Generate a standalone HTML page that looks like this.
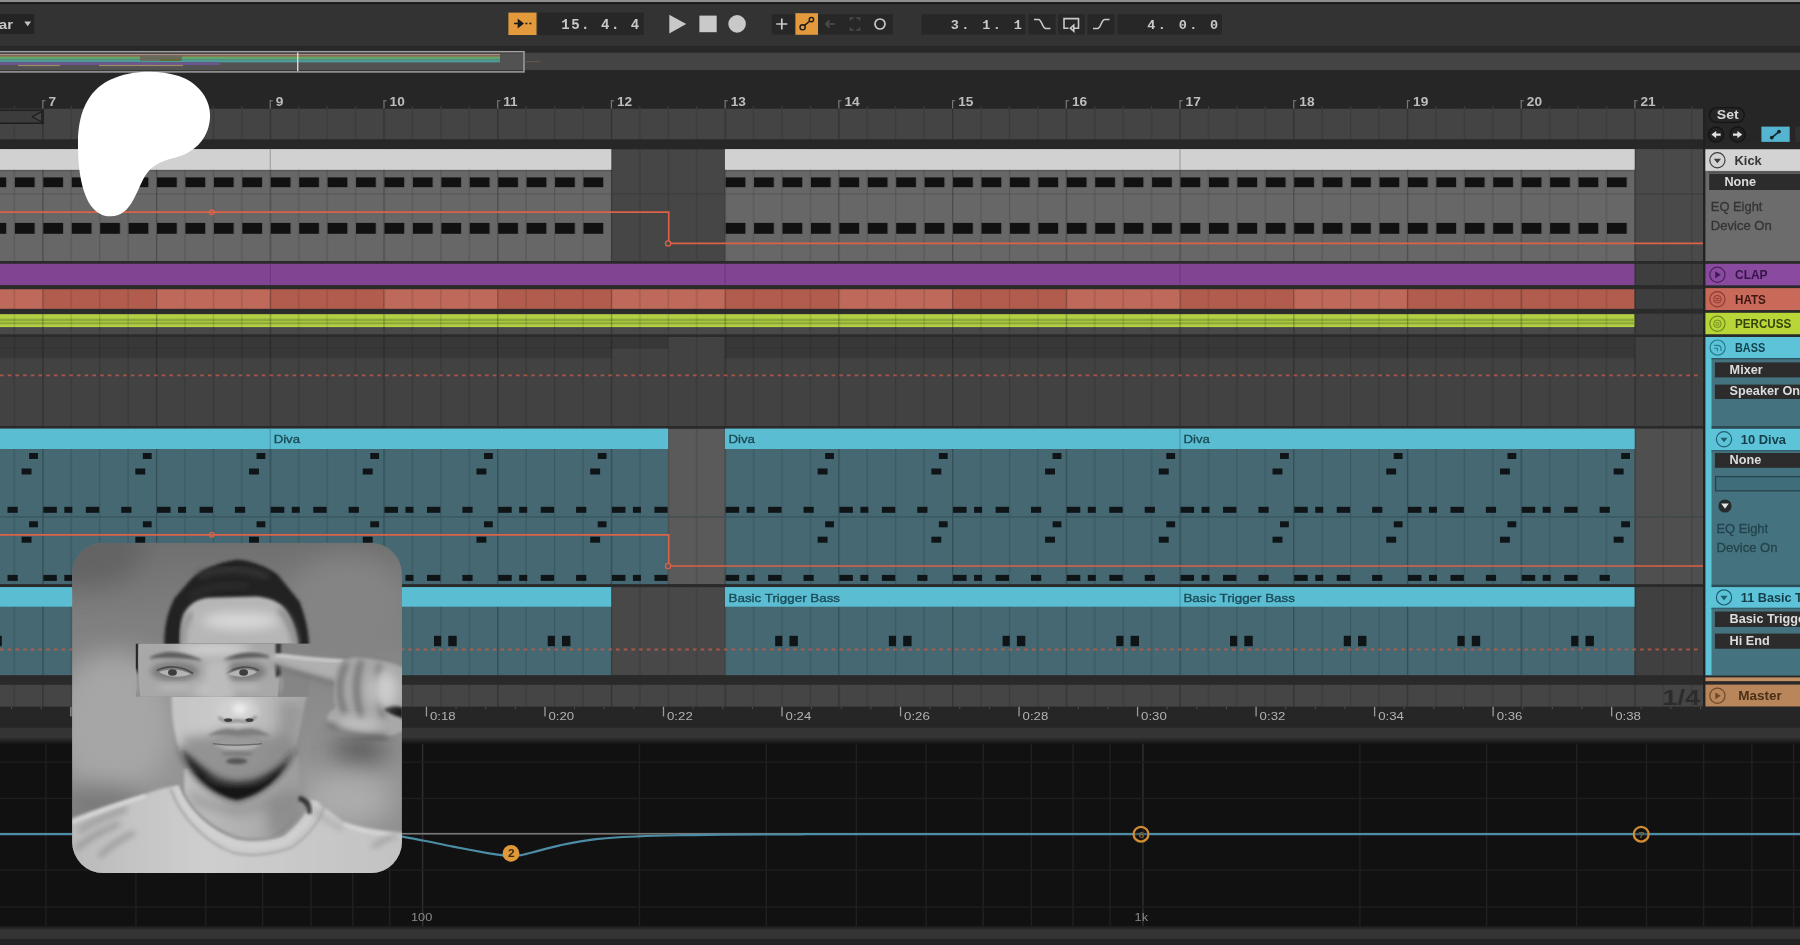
<!DOCTYPE html>
<html lang="en"><head><meta charset="utf-8"><title>Arrangement</title>
<style>
html,body{margin:0;padding:0;background:#262626;overflow:hidden}
body{width:1800px;height:945px;position:relative;font-family:"Liberation Sans",sans-serif}
svg{position:absolute;left:0;top:0;display:block;filter:blur(0.55px)}
text{white-space:pre}
</style></head><body>
<svg width="1800" height="945" viewBox="0 0 1800 945">
<defs>
<pattern id="grid" patternUnits="userSpaceOnUse" x="-71.49" y="0" width="113.720" height="10">
<rect x="0" y="0" width="1.3" height="10" fill="#000" fill-opacity=".26"/>
<rect x="28.43" y="0" width="1.2" height="10" fill="#000" fill-opacity=".15"/>
<rect x="56.86" y="0" width="1.2" height="10" fill="#000" fill-opacity=".15"/>
<rect x="85.29" y="0" width="1.2" height="10" fill="#000" fill-opacity=".15"/>
</pattern>
<pattern id="kick" patternUnits="userSpaceOnUse" x="-70.39" y="0" width="28.430" height="10">
<rect x="0" y="0" width="19.8" height="10" fill="#111"/>
</pattern>
<filter id="b1" x="-20%" y="-20%" width="140%" height="140%"><feGaussianBlur stdDeviation="1"/></filter>
<filter id="b2" x="-20%" y="-20%" width="140%" height="140%"><feGaussianBlur stdDeviation="2"/></filter>
<filter id="b3" x="-30%" y="-30%" width="160%" height="160%"><feGaussianBlur stdDeviation="3.5"/></filter>
<filter id="b6" x="-40%" y="-40%" width="180%" height="180%"><feGaussianBlur stdDeviation="6"/></filter>
<filter id="b12" x="-50%" y="-50%" width="200%" height="200%"><feGaussianBlur stdDeviation="12"/></filter>
<filter id="b25" x="-60%" y="-60%" width="220%" height="220%"><feGaussianBlur stdDeviation="25"/></filter>
<clipPath id="photoclip"><rect x="72.2" y="543" width="329.7" height="330" rx="31" ry="31"/></clipPath>
<clipPath id="gridclip"><rect x="0" y="0" width="1703.0" height="945"/></clipPath>
</defs>
<rect x="0.00" y="0.00" width="1800.00" height="945.00" fill="#262626"/>
<rect x="0.00" y="0.00" width="1800.00" height="2.20" fill="#8e8e8e"/>
<rect x="0.00" y="2.20" width="1800.00" height="2.00" fill="#1b1b1b"/>
<rect x="0.00" y="4.20" width="1800.00" height="41.80" fill="#333333"/>
<rect x="0.00" y="46.00" width="1800.00" height="6.70" fill="#282828"/>
<rect x="0.00" y="52.70" width="1800.00" height="17.60" fill="#444444"/>
<rect x="0.00" y="70.30" width="1800.00" height="38.40" fill="#262626"/>
<rect x="0.00" y="14.00" width="34.20" height="20.00" fill="#242424"/>
<text x="-1.20" y="28.70" font-family='"Liberation Sans",sans-serif' font-size="13.5" font-weight="bold" fill="#c8c8c8" textLength="14.3" lengthAdjust="spacingAndGlyphs">ar</text>
<path d="M24.3 21.6h6.8l-3.4 4.6z" fill="#c4c4c4"/>
<rect x="508.40" y="12.60" width="28.10" height="22.40" fill="#e39a3c"/>
<path d="M514 23.6h6.5M518.4 20.2l4.4 3.4-4.4 3.4z" stroke="#1a1a1a" stroke-width="1.5" fill="#1a1a1a"/>
<path d="M525.4 23.6h2M529.4 23.6h2" stroke="#1a1a1a" stroke-width="1.5"/>
<rect x="537.80" y="12.60" width="106.00" height="22.40" fill="#272727"/>
<text x="561.20" y="29.00" font-family='"Liberation Mono",monospace' font-size="14" font-weight="bold" fill="#c9c9c9" textLength="78" lengthAdjust="spacing">15. 4. 4</text>
<path d="M669.3 14.7L686.2 24 669.3 33.4z" fill="#c9c9c9"/>
<rect x="699.40" y="15.60" width="17.30" height="16.60" fill="#c9c9c9"/>
<circle cx="737.1" cy="23.9" r="8.8" fill="#c9c9c9"/>
<rect x="771.80" y="14.20" width="121.00" height="20.20" fill="#272727"/>
<path d="M776.3 24h11M781.8 18.5v11" stroke="#c9c9c9" stroke-width="1.7"/>
<rect x="795.40" y="13.20" width="22.60" height="21.60" fill="#e39a3c"/>
<g stroke="#1a1a1a" stroke-width="1.4" fill="none"><circle cx="802.6" cy="27.3" r="2.6"/><circle cx="811.4" cy="19.6" r="2.2"/><path d="M804.6 25.4l5-4.2"/></g>
<path d="M826 24h9M829.6 20.4L826 24l3.6 3.6" stroke="#4e4e4e" stroke-width="1.6" fill="none"/>
<path d="M850.5 20.5v-2.5h3M859.5 20.5v-2.5h-3M850.5 27.5v2.5h3M859.5 27.5v2.5h-3" stroke="#4e4e4e" stroke-width="1.5" fill="none"/>
<circle cx="880" cy="24" r="5" stroke="#c9c9c9" stroke-width="1.7" fill="none"/>
<rect x="921.50" y="14.20" width="104.00" height="20.20" fill="#272727"/>
<text x="950.80" y="28.60" font-family='"Liberation Mono",monospace' font-size="13.5" font-weight="bold" fill="#c9c9c9" textLength="71" lengthAdjust="spacing">3. 1. 1</text>
<rect x="1028.50" y="14.20" width="27.00" height="20.20" fill="#272727"/>
<path d="M1034 19.5h4.5c3.5 0 3.5 9 7.5 9h4.5" stroke="#c9c9c9" stroke-width="1.6" fill="none"/>
<rect x="1058.00" y="14.20" width="27.00" height="20.20" fill="#272727"/>
<path d="M1068.5 28.2h-4.5v-9.6h14.5v9.6h-4.5M1073.8 25.2l-3.4 3 3.4 3z" stroke="#c9c9c9" stroke-width="1.6" fill="none"/>
<rect x="1087.50" y="14.20" width="27.00" height="20.20" fill="#272727"/>
<path d="M1093 28.5h4.5c3.5 0 3.5-9 7.5-9h4.5" stroke="#c9c9c9" stroke-width="1.6" fill="none"/>
<rect x="1117.50" y="14.20" width="104.50" height="20.20" fill="#272727"/>
<text x="1147.20" y="28.60" font-family='"Liberation Mono",monospace' font-size="13.5" font-weight="bold" fill="#c9c9c9" textLength="71" lengthAdjust="spacing">4. 0. 0</text>
<rect x="0.00" y="53.60" width="523.00" height="16.80" fill="#525252"/>
<rect x="0.00" y="54.00" width="500.00" height="1.30" fill="#b08a86"/>
<rect x="0.00" y="55.60" width="500.00" height="1.50" fill="#8b7d4e"/>
<rect x="0.00" y="57.00" width="500.00" height="2.60" fill="#5aa870"/>
<rect x="0.00" y="59.60" width="500.00" height="2.80" fill="#4f9a96"/>
<rect x="0.00" y="62.40" width="220.00" height="2.60" fill="#6b5690"/>
<rect x="18.00" y="64.90" width="42.00" height="1.20" fill="#9c8d62"/>
<rect x="99.00" y="64.90" width="84.00" height="1.20" fill="#9c8d62"/>
<rect x="140.00" y="55.20" width="42.00" height="5.60" fill="#6a6a5a"/>
<rect x="160.00" y="59.00" width="20.00" height="1.60" fill="#5d6a2c"/>
<rect x="-3" y="51.7" width="527" height="20.2" fill="none" stroke="#a0a0a0" stroke-width="1.5"/>
<rect x="297.00" y="52.50" width="1.40" height="18.60" fill="#d8d8d8"/>
<rect x="524.50" y="61.20" width="16.00" height="1.00" fill="#6b5a48"/>
<rect x="-71.49" y="100.20" width="1.20" height="8.60" fill="#767676"/>
<rect x="-71.49" y="100.20" width="3.20" height="1.10" fill="#767676"/>
<text x="-65.29" y="105.90" font-family='"Liberation Sans",sans-serif' font-size="12.2" font-weight="bold" fill="#bdbdbd" textLength="7.6" lengthAdjust="spacingAndGlyphs">6</text>
<rect x="42.23" y="100.20" width="1.20" height="8.60" fill="#767676"/>
<rect x="42.23" y="100.20" width="3.20" height="1.10" fill="#767676"/>
<text x="48.43" y="105.90" font-family='"Liberation Sans",sans-serif' font-size="12.2" font-weight="bold" fill="#bdbdbd" textLength="7.6" lengthAdjust="spacingAndGlyphs">7</text>
<rect x="269.67" y="100.20" width="1.20" height="8.60" fill="#767676"/>
<rect x="269.67" y="100.20" width="3.20" height="1.10" fill="#767676"/>
<text x="275.87" y="105.90" font-family='"Liberation Sans",sans-serif' font-size="12.2" font-weight="bold" fill="#bdbdbd" textLength="7.6" lengthAdjust="spacingAndGlyphs">9</text>
<rect x="383.39" y="100.20" width="1.20" height="8.60" fill="#767676"/>
<rect x="383.39" y="100.20" width="3.20" height="1.10" fill="#767676"/>
<text x="389.59" y="105.90" font-family='"Liberation Sans",sans-serif' font-size="12.2" font-weight="bold" fill="#bdbdbd" textLength="15.2" lengthAdjust="spacingAndGlyphs">10</text>
<rect x="497.11" y="100.20" width="1.20" height="8.60" fill="#767676"/>
<rect x="497.11" y="100.20" width="3.20" height="1.10" fill="#767676"/>
<text x="503.31" y="105.90" font-family='"Liberation Sans",sans-serif' font-size="12.2" font-weight="bold" fill="#bdbdbd" textLength="14.4" lengthAdjust="spacingAndGlyphs">11</text>
<rect x="610.83" y="100.20" width="1.20" height="8.60" fill="#767676"/>
<rect x="610.83" y="100.20" width="3.20" height="1.10" fill="#767676"/>
<text x="617.03" y="105.90" font-family='"Liberation Sans",sans-serif' font-size="12.2" font-weight="bold" fill="#bdbdbd" textLength="15.2" lengthAdjust="spacingAndGlyphs">12</text>
<rect x="724.55" y="100.20" width="1.20" height="8.60" fill="#767676"/>
<rect x="724.55" y="100.20" width="3.20" height="1.10" fill="#767676"/>
<text x="730.75" y="105.90" font-family='"Liberation Sans",sans-serif' font-size="12.2" font-weight="bold" fill="#bdbdbd" textLength="15.2" lengthAdjust="spacingAndGlyphs">13</text>
<rect x="838.27" y="100.20" width="1.20" height="8.60" fill="#767676"/>
<rect x="838.27" y="100.20" width="3.20" height="1.10" fill="#767676"/>
<text x="844.47" y="105.90" font-family='"Liberation Sans",sans-serif' font-size="12.2" font-weight="bold" fill="#bdbdbd" textLength="15.2" lengthAdjust="spacingAndGlyphs">14</text>
<rect x="951.99" y="100.20" width="1.20" height="8.60" fill="#767676"/>
<rect x="951.99" y="100.20" width="3.20" height="1.10" fill="#767676"/>
<text x="958.19" y="105.90" font-family='"Liberation Sans",sans-serif' font-size="12.2" font-weight="bold" fill="#bdbdbd" textLength="15.2" lengthAdjust="spacingAndGlyphs">15</text>
<rect x="1065.71" y="100.20" width="1.20" height="8.60" fill="#767676"/>
<rect x="1065.71" y="100.20" width="3.20" height="1.10" fill="#767676"/>
<text x="1071.91" y="105.90" font-family='"Liberation Sans",sans-serif' font-size="12.2" font-weight="bold" fill="#bdbdbd" textLength="15.2" lengthAdjust="spacingAndGlyphs">16</text>
<rect x="1179.43" y="100.20" width="1.20" height="8.60" fill="#767676"/>
<rect x="1179.43" y="100.20" width="3.20" height="1.10" fill="#767676"/>
<text x="1185.63" y="105.90" font-family='"Liberation Sans",sans-serif' font-size="12.2" font-weight="bold" fill="#bdbdbd" textLength="15.2" lengthAdjust="spacingAndGlyphs">17</text>
<rect x="1293.15" y="100.20" width="1.20" height="8.60" fill="#767676"/>
<rect x="1293.15" y="100.20" width="3.20" height="1.10" fill="#767676"/>
<text x="1299.35" y="105.90" font-family='"Liberation Sans",sans-serif' font-size="12.2" font-weight="bold" fill="#bdbdbd" textLength="15.2" lengthAdjust="spacingAndGlyphs">18</text>
<rect x="1406.87" y="100.20" width="1.20" height="8.60" fill="#767676"/>
<rect x="1406.87" y="100.20" width="3.20" height="1.10" fill="#767676"/>
<text x="1413.07" y="105.90" font-family='"Liberation Sans",sans-serif' font-size="12.2" font-weight="bold" fill="#bdbdbd" textLength="15.2" lengthAdjust="spacingAndGlyphs">19</text>
<rect x="1520.59" y="100.20" width="1.20" height="8.60" fill="#767676"/>
<rect x="1520.59" y="100.20" width="3.20" height="1.10" fill="#767676"/>
<text x="1526.79" y="105.90" font-family='"Liberation Sans",sans-serif' font-size="12.2" font-weight="bold" fill="#bdbdbd" textLength="15.2" lengthAdjust="spacingAndGlyphs">20</text>
<rect x="1634.31" y="100.20" width="1.20" height="8.60" fill="#767676"/>
<rect x="1634.31" y="100.20" width="3.20" height="1.10" fill="#767676"/>
<text x="1640.51" y="105.90" font-family='"Liberation Sans",sans-serif' font-size="12.2" font-weight="bold" fill="#bdbdbd" textLength="15.2" lengthAdjust="spacingAndGlyphs">21</text>
<rect x="-156.68" y="106.40" width="1.00" height="2.30" fill="#474747"/>
<rect x="-128.25" y="106.40" width="1.00" height="2.30" fill="#474747"/>
<rect x="-99.82" y="106.40" width="1.00" height="2.30" fill="#474747"/>
<rect x="-42.96" y="106.40" width="1.00" height="2.30" fill="#474747"/>
<rect x="-14.53" y="106.40" width="1.00" height="2.30" fill="#474747"/>
<rect x="13.90" y="106.40" width="1.00" height="2.30" fill="#474747"/>
<rect x="70.76" y="106.40" width="1.00" height="2.30" fill="#474747"/>
<rect x="99.19" y="106.40" width="1.00" height="2.30" fill="#474747"/>
<rect x="127.62" y="106.40" width="1.00" height="2.30" fill="#474747"/>
<rect x="184.48" y="106.40" width="1.00" height="2.30" fill="#474747"/>
<rect x="212.91" y="106.40" width="1.00" height="2.30" fill="#474747"/>
<rect x="241.34" y="106.40" width="1.00" height="2.30" fill="#474747"/>
<rect x="298.20" y="106.40" width="1.00" height="2.30" fill="#474747"/>
<rect x="326.63" y="106.40" width="1.00" height="2.30" fill="#474747"/>
<rect x="355.06" y="106.40" width="1.00" height="2.30" fill="#474747"/>
<rect x="411.92" y="106.40" width="1.00" height="2.30" fill="#474747"/>
<rect x="440.35" y="106.40" width="1.00" height="2.30" fill="#474747"/>
<rect x="468.78" y="106.40" width="1.00" height="2.30" fill="#474747"/>
<rect x="525.64" y="106.40" width="1.00" height="2.30" fill="#474747"/>
<rect x="554.07" y="106.40" width="1.00" height="2.30" fill="#474747"/>
<rect x="582.50" y="106.40" width="1.00" height="2.30" fill="#474747"/>
<rect x="639.36" y="106.40" width="1.00" height="2.30" fill="#474747"/>
<rect x="667.79" y="106.40" width="1.00" height="2.30" fill="#474747"/>
<rect x="696.22" y="106.40" width="1.00" height="2.30" fill="#474747"/>
<rect x="753.08" y="106.40" width="1.00" height="2.30" fill="#474747"/>
<rect x="781.51" y="106.40" width="1.00" height="2.30" fill="#474747"/>
<rect x="809.94" y="106.40" width="1.00" height="2.30" fill="#474747"/>
<rect x="866.80" y="106.40" width="1.00" height="2.30" fill="#474747"/>
<rect x="895.23" y="106.40" width="1.00" height="2.30" fill="#474747"/>
<rect x="923.66" y="106.40" width="1.00" height="2.30" fill="#474747"/>
<rect x="980.52" y="106.40" width="1.00" height="2.30" fill="#474747"/>
<rect x="1008.95" y="106.40" width="1.00" height="2.30" fill="#474747"/>
<rect x="1037.38" y="106.40" width="1.00" height="2.30" fill="#474747"/>
<rect x="1094.24" y="106.40" width="1.00" height="2.30" fill="#474747"/>
<rect x="1122.67" y="106.40" width="1.00" height="2.30" fill="#474747"/>
<rect x="1151.10" y="106.40" width="1.00" height="2.30" fill="#474747"/>
<rect x="1207.96" y="106.40" width="1.00" height="2.30" fill="#474747"/>
<rect x="1236.39" y="106.40" width="1.00" height="2.30" fill="#474747"/>
<rect x="1264.82" y="106.40" width="1.00" height="2.30" fill="#474747"/>
<rect x="1321.68" y="106.40" width="1.00" height="2.30" fill="#474747"/>
<rect x="1350.11" y="106.40" width="1.00" height="2.30" fill="#474747"/>
<rect x="1378.54" y="106.40" width="1.00" height="2.30" fill="#474747"/>
<rect x="1435.40" y="106.40" width="1.00" height="2.30" fill="#474747"/>
<rect x="1463.83" y="106.40" width="1.00" height="2.30" fill="#474747"/>
<rect x="1492.26" y="106.40" width="1.00" height="2.30" fill="#474747"/>
<rect x="1549.12" y="106.40" width="1.00" height="2.30" fill="#474747"/>
<rect x="1577.55" y="106.40" width="1.00" height="2.30" fill="#474747"/>
<rect x="1605.98" y="106.40" width="1.00" height="2.30" fill="#474747"/>
<rect x="1662.84" y="106.40" width="1.00" height="2.30" fill="#474747"/>
<rect x="1691.27" y="106.40" width="1.00" height="2.30" fill="#474747"/>
<rect x="0.00" y="108.70" width="1703.00" height="30.90" fill="#444444"/>
<rect x="0.00" y="108.70" width="1703.00" height="30.90" fill="url(#grid)"/>
<rect x="0.00" y="139.60" width="1800.00" height="9.70" fill="#272727"/>
<path d="M-2 110.2H43.1V123.3H-2" fill="#3c3c3c" stroke="#1e1e1e" stroke-width="1.4"/>
<path d="M41.8 111.6v10.4l-9.5-5.2z" fill="#454545" stroke="#1e1e1e" stroke-width="1.2"/>
<g clip-path="url(#gridclip)">
<rect x="0.00" y="149.30" width="1703.00" height="111.90" fill="#464646"/>
<rect x="1634.51" y="149.30" width="68.49" height="111.90" fill="#4a4a4a"/>
<rect x="0.00" y="149.30" width="611.23" height="111.90" fill="#676767"/>
<rect x="0.00" y="169.40" width="611.23" height="2.00" fill="#5a5a5a"/>
<rect x="0.00" y="193.40" width="611.23" height="1.30" fill="#5c5c5c"/>
<rect x="0.00" y="149.30" width="611.23" height="20.30" fill="#d1d1d1"/>
<rect x="0.00" y="177.40" width="611.23" height="9.80" fill="url(#kick)"/>
<rect x="0.00" y="222.90" width="611.23" height="10.90" fill="url(#kick)"/>
<rect x="724.95" y="149.30" width="909.56" height="111.90" fill="#676767"/>
<rect x="724.95" y="169.40" width="909.56" height="2.00" fill="#5a5a5a"/>
<rect x="724.95" y="193.40" width="909.56" height="1.30" fill="#5c5c5c"/>
<rect x="724.95" y="149.30" width="909.56" height="20.30" fill="#d1d1d1"/>
<rect x="724.95" y="177.40" width="909.56" height="9.80" fill="url(#kick)"/>
<rect x="724.95" y="222.90" width="909.56" height="10.90" fill="url(#kick)"/>
<rect x="269.77" y="149.30" width="1.00" height="20.30" fill="#9a9a9a"/>
<rect x="1179.53" y="149.30" width="1.00" height="20.30" fill="#9a9a9a"/>
<rect x="0.00" y="149.30" width="1703.00" height="111.90" fill="url(#grid)"/>
<rect x="0.00" y="149.30" width="611.23" height="20.30" fill="#d1d1d1"/>
<rect x="724.95" y="149.30" width="909.56" height="20.30" fill="#d1d1d1"/>
<rect x="269.77" y="149.30" width="1.00" height="20.30" fill="#9a9a9a"/>
<rect x="1179.53" y="149.30" width="1.00" height="20.30" fill="#9a9a9a"/>
<rect x="611.23" y="193.40" width="113.72" height="1.20" fill="#3e3e3e"/>
<rect x="1634.51" y="193.40" width="68.49" height="1.20" fill="#3e3e3e"/>
<rect x="0.00" y="261.20" width="1703.00" height="2.60" fill="#2a2a2a"/>
<rect x="0.00" y="263.80" width="1703.00" height="21.50" fill="#3e3e3e"/>
<rect x="0.00" y="263.80" width="1634.51" height="21.50" fill="#804492"/>
<rect x="269.77" y="263.80" width="1.00" height="21.50" fill="#6c3580"/>
<rect x="724.65" y="263.80" width="1.00" height="21.50" fill="#6c3580"/>
<rect x="1179.53" y="263.80" width="1.00" height="21.50" fill="#6c3580"/>
<rect x="1634.51" y="263.80" width="68.49" height="21.50" fill="url(#grid)"/>
<rect x="0.00" y="285.30" width="1703.00" height="4.00" fill="#2b2b2b"/>
<rect x="0.00" y="289.30" width="1703.00" height="19.60" fill="#3e3e3e"/>
<rect x="-70.89" y="289.30" width="114.02" height="19.60" fill="#be6959"/>
<rect x="42.83" y="289.30" width="114.02" height="19.60" fill="#b25c4e"/>
<rect x="156.55" y="289.30" width="114.02" height="19.60" fill="#be6959"/>
<rect x="270.27" y="289.30" width="114.02" height="19.60" fill="#b25c4e"/>
<rect x="383.99" y="289.30" width="114.02" height="19.60" fill="#be6959"/>
<rect x="497.71" y="289.30" width="114.02" height="19.60" fill="#b25c4e"/>
<rect x="611.43" y="289.30" width="114.02" height="19.60" fill="#be6959"/>
<rect x="725.15" y="289.30" width="114.02" height="19.60" fill="#b25c4e"/>
<rect x="838.87" y="289.30" width="114.02" height="19.60" fill="#be6959"/>
<rect x="952.59" y="289.30" width="114.02" height="19.60" fill="#b25c4e"/>
<rect x="1066.31" y="289.30" width="114.02" height="19.60" fill="#be6959"/>
<rect x="1180.03" y="289.30" width="114.02" height="19.60" fill="#b25c4e"/>
<rect x="1293.75" y="289.30" width="114.02" height="19.60" fill="#be6959"/>
<rect x="1407.47" y="289.30" width="114.02" height="19.60" fill="#b25c4e"/>
<rect x="1521.19" y="289.30" width="114.02" height="19.60" fill="#b25c4e"/>
<rect x="1634.51" y="289.30" width="68.49" height="19.60" fill="#3e3e3e"/>
<rect x="0.00" y="289.30" width="1703.00" height="19.60" fill="url(#grid)"/>
<rect x="0.00" y="308.90" width="1703.00" height="4.90" fill="#2b2b2b"/>
<rect x="0.00" y="313.80" width="1703.00" height="20.80" fill="#484848"/>
<rect x="1634.51" y="313.80" width="68.49" height="20.80" fill="#3e3e3e"/>
<rect x="0.00" y="314.20" width="1634.51" height="12.90" fill="#b3d044"/>
<rect x="0.00" y="318.60" width="1634.51" height="2.60" fill="#8dab39"/>
<rect x="0.00" y="322.20" width="1634.51" height="2.20" fill="#8dab39"/>
<rect x="0.00" y="313.80" width="1703.00" height="20.80" fill="url(#grid)"/>
<rect x="0.00" y="334.60" width="1703.00" height="2.40" fill="#2b2b2b"/>
<rect x="0.00" y="337.00" width="1703.00" height="89.00" fill="#424242"/>
<rect x="1634.51" y="337.00" width="68.49" height="89.00" fill="#404040"/>
<rect x="0.00" y="337.00" width="668.09" height="10.90" fill="#383838"/>
<rect x="724.95" y="337.00" width="909.56" height="10.90" fill="#383838"/>
<rect x="0.00" y="347.90" width="611.23" height="10.40" fill="#383838"/>
<rect x="724.95" y="347.90" width="909.56" height="10.40" fill="#383838"/>
<rect x="0.00" y="347.50" width="668.09" height="1.00" fill="#333333"/>
<rect x="724.95" y="347.50" width="909.56" height="1.00" fill="#333333"/>
<rect x="0.00" y="337.00" width="1703.00" height="89.00" fill="url(#grid)"/>
<path d="M0 375.4H1700.0" stroke="#c55c46" stroke-width="1.8" stroke-dasharray="3.6 4.1" opacity=".78"/>
<rect x="0.00" y="426.00" width="1703.00" height="2.80" fill="#2a2a2a"/>
<rect x="0.00" y="428.80" width="1703.00" height="155.50" fill="#5a5a5a"/>
<rect x="1634.51" y="428.80" width="68.49" height="155.50" fill="#4f4f4f"/>
<rect x="0.00" y="428.80" width="668.09" height="155.50" fill="#456873"/>
<rect x="0.00" y="428.80" width="668.09" height="20.20" fill="#5bbdd2"/>
<rect x="724.95" y="428.80" width="455.08" height="155.50" fill="#456873"/>
<rect x="724.95" y="428.80" width="455.08" height="20.20" fill="#5bbdd2"/>
<rect x="1180.03" y="428.80" width="454.48" height="155.50" fill="#456873"/>
<rect x="1180.03" y="428.80" width="454.48" height="20.20" fill="#5bbdd2"/>
<rect x="269.77" y="428.80" width="1.00" height="20.20" fill="#3f93a6"/>
<rect x="1179.53" y="428.80" width="1.00" height="20.20" fill="#3f93a6"/>
<rect x="0.00" y="428.80" width="1703.00" height="155.50" fill="url(#grid)"/>
<rect x="0.00" y="516.30" width="1703.00" height="1.20" fill="#38545d"/>
<rect x="668.09" y="516.30" width="56.86" height="1.20" fill="#4e4e4e"/>
<rect x="1634.51" y="516.30" width="68.49" height="1.20" fill="#444444"/>
<rect x="0.00" y="428.80" width="668.09" height="20.20" fill="#5bbdd2"/>
<rect x="724.95" y="428.80" width="455.08" height="20.20" fill="#5bbdd2"/>
<rect x="1180.03" y="428.80" width="454.48" height="20.20" fill="#5bbdd2"/>
<rect x="269.77" y="428.80" width="1.00" height="20.20" fill="#3f93a6"/>
<rect x="1179.53" y="428.80" width="1.00" height="20.20" fill="#3f93a6"/>
<text x="273.67" y="443.40" font-family='"Liberation Sans",sans-serif' font-size="11.8" font-weight="normal" fill="#1a4a56" stroke="#1a4a56" stroke-width=".35" textLength="26.4" lengthAdjust="spacingAndGlyphs">Diva</text>
<text x="728.55" y="443.40" font-family='"Liberation Sans",sans-serif' font-size="11.8" font-weight="normal" fill="#1a4a56" stroke="#1a4a56" stroke-width=".35" textLength="26.4" lengthAdjust="spacingAndGlyphs">Diva</text>
<text x="1183.43" y="443.40" font-family='"Liberation Sans",sans-serif' font-size="11.8" font-weight="normal" fill="#1a4a56" stroke="#1a4a56" stroke-width=".35" textLength="26.4" lengthAdjust="spacingAndGlyphs">Diva</text>
<rect x="29.11" y="453.00" width="8.80" height="6.00" fill="#0f1417"/>
<rect x="21.61" y="468.50" width="9.90" height="6.00" fill="#0f1417"/>
<rect x="29.11" y="521.30" width="8.80" height="6.00" fill="#0f1417"/>
<rect x="21.61" y="536.70" width="9.90" height="6.00" fill="#0f1417"/>
<rect x="7.51" y="506.80" width="10.20" height="6.00" fill="#0f1417"/>
<rect x="7.51" y="574.90" width="10.20" height="6.00" fill="#0f1417"/>
<rect x="142.83" y="453.00" width="8.80" height="6.00" fill="#0f1417"/>
<rect x="135.33" y="468.50" width="9.90" height="6.00" fill="#0f1417"/>
<rect x="142.83" y="521.30" width="8.80" height="6.00" fill="#0f1417"/>
<rect x="135.33" y="536.70" width="9.90" height="6.00" fill="#0f1417"/>
<rect x="43.33" y="506.80" width="13.50" height="6.00" fill="#0f1417"/>
<rect x="64.33" y="506.80" width="8.00" height="6.00" fill="#0f1417"/>
<rect x="85.83" y="506.80" width="13.40" height="6.00" fill="#0f1417"/>
<rect x="121.23" y="506.80" width="10.20" height="6.00" fill="#0f1417"/>
<rect x="43.33" y="574.90" width="13.50" height="6.00" fill="#0f1417"/>
<rect x="64.33" y="574.90" width="8.00" height="6.00" fill="#0f1417"/>
<rect x="85.83" y="574.90" width="13.40" height="6.00" fill="#0f1417"/>
<rect x="121.23" y="574.90" width="10.20" height="6.00" fill="#0f1417"/>
<rect x="256.55" y="453.00" width="8.80" height="6.00" fill="#0f1417"/>
<rect x="249.05" y="468.50" width="9.90" height="6.00" fill="#0f1417"/>
<rect x="256.55" y="521.30" width="8.80" height="6.00" fill="#0f1417"/>
<rect x="249.05" y="536.70" width="9.90" height="6.00" fill="#0f1417"/>
<rect x="157.05" y="506.80" width="13.50" height="6.00" fill="#0f1417"/>
<rect x="178.05" y="506.80" width="8.00" height="6.00" fill="#0f1417"/>
<rect x="199.55" y="506.80" width="13.40" height="6.00" fill="#0f1417"/>
<rect x="234.95" y="506.80" width="10.20" height="6.00" fill="#0f1417"/>
<rect x="157.05" y="574.90" width="13.50" height="6.00" fill="#0f1417"/>
<rect x="178.05" y="574.90" width="8.00" height="6.00" fill="#0f1417"/>
<rect x="199.55" y="574.90" width="13.40" height="6.00" fill="#0f1417"/>
<rect x="234.95" y="574.90" width="10.20" height="6.00" fill="#0f1417"/>
<rect x="370.27" y="453.00" width="8.80" height="6.00" fill="#0f1417"/>
<rect x="362.77" y="468.50" width="9.90" height="6.00" fill="#0f1417"/>
<rect x="370.27" y="521.30" width="8.80" height="6.00" fill="#0f1417"/>
<rect x="362.77" y="536.70" width="9.90" height="6.00" fill="#0f1417"/>
<rect x="270.77" y="506.80" width="13.50" height="6.00" fill="#0f1417"/>
<rect x="291.77" y="506.80" width="8.00" height="6.00" fill="#0f1417"/>
<rect x="313.27" y="506.80" width="13.40" height="6.00" fill="#0f1417"/>
<rect x="348.67" y="506.80" width="10.20" height="6.00" fill="#0f1417"/>
<rect x="270.77" y="574.90" width="13.50" height="6.00" fill="#0f1417"/>
<rect x="291.77" y="574.90" width="8.00" height="6.00" fill="#0f1417"/>
<rect x="313.27" y="574.90" width="13.40" height="6.00" fill="#0f1417"/>
<rect x="348.67" y="574.90" width="10.20" height="6.00" fill="#0f1417"/>
<rect x="483.99" y="453.00" width="8.80" height="6.00" fill="#0f1417"/>
<rect x="476.49" y="468.50" width="9.90" height="6.00" fill="#0f1417"/>
<rect x="483.99" y="521.30" width="8.80" height="6.00" fill="#0f1417"/>
<rect x="476.49" y="536.70" width="9.90" height="6.00" fill="#0f1417"/>
<rect x="384.49" y="506.80" width="13.50" height="6.00" fill="#0f1417"/>
<rect x="405.49" y="506.80" width="8.00" height="6.00" fill="#0f1417"/>
<rect x="426.99" y="506.80" width="13.40" height="6.00" fill="#0f1417"/>
<rect x="462.39" y="506.80" width="10.20" height="6.00" fill="#0f1417"/>
<rect x="384.49" y="574.90" width="13.50" height="6.00" fill="#0f1417"/>
<rect x="405.49" y="574.90" width="8.00" height="6.00" fill="#0f1417"/>
<rect x="426.99" y="574.90" width="13.40" height="6.00" fill="#0f1417"/>
<rect x="462.39" y="574.90" width="10.20" height="6.00" fill="#0f1417"/>
<rect x="597.71" y="453.00" width="8.80" height="6.00" fill="#0f1417"/>
<rect x="590.21" y="468.50" width="9.90" height="6.00" fill="#0f1417"/>
<rect x="597.71" y="521.30" width="8.80" height="6.00" fill="#0f1417"/>
<rect x="590.21" y="536.70" width="9.90" height="6.00" fill="#0f1417"/>
<rect x="498.21" y="506.80" width="13.50" height="6.00" fill="#0f1417"/>
<rect x="519.21" y="506.80" width="8.00" height="6.00" fill="#0f1417"/>
<rect x="540.71" y="506.80" width="13.40" height="6.00" fill="#0f1417"/>
<rect x="576.11" y="506.80" width="10.20" height="6.00" fill="#0f1417"/>
<rect x="498.21" y="574.90" width="13.50" height="6.00" fill="#0f1417"/>
<rect x="519.21" y="574.90" width="8.00" height="6.00" fill="#0f1417"/>
<rect x="540.71" y="574.90" width="13.40" height="6.00" fill="#0f1417"/>
<rect x="576.11" y="574.90" width="10.20" height="6.00" fill="#0f1417"/>
<rect x="611.93" y="506.80" width="13.50" height="6.00" fill="#0f1417"/>
<rect x="632.93" y="506.80" width="8.00" height="6.00" fill="#0f1417"/>
<rect x="654.43" y="506.80" width="13.16" height="6.00" fill="#0f1417"/>
<rect x="611.93" y="574.90" width="13.50" height="6.00" fill="#0f1417"/>
<rect x="632.93" y="574.90" width="8.00" height="6.00" fill="#0f1417"/>
<rect x="654.43" y="574.90" width="13.16" height="6.00" fill="#0f1417"/>
<rect x="825.15" y="453.00" width="8.80" height="6.00" fill="#0f1417"/>
<rect x="817.65" y="468.50" width="9.90" height="6.00" fill="#0f1417"/>
<rect x="825.15" y="521.30" width="8.80" height="6.00" fill="#0f1417"/>
<rect x="817.65" y="536.70" width="9.90" height="6.00" fill="#0f1417"/>
<rect x="725.65" y="506.80" width="13.50" height="6.00" fill="#0f1417"/>
<rect x="746.65" y="506.80" width="8.00" height="6.00" fill="#0f1417"/>
<rect x="768.15" y="506.80" width="13.40" height="6.00" fill="#0f1417"/>
<rect x="803.55" y="506.80" width="10.20" height="6.00" fill="#0f1417"/>
<rect x="725.65" y="574.90" width="13.50" height="6.00" fill="#0f1417"/>
<rect x="746.65" y="574.90" width="8.00" height="6.00" fill="#0f1417"/>
<rect x="768.15" y="574.90" width="13.40" height="6.00" fill="#0f1417"/>
<rect x="803.55" y="574.90" width="10.20" height="6.00" fill="#0f1417"/>
<rect x="938.87" y="453.00" width="8.80" height="6.00" fill="#0f1417"/>
<rect x="931.37" y="468.50" width="9.90" height="6.00" fill="#0f1417"/>
<rect x="938.87" y="521.30" width="8.80" height="6.00" fill="#0f1417"/>
<rect x="931.37" y="536.70" width="9.90" height="6.00" fill="#0f1417"/>
<rect x="839.37" y="506.80" width="13.50" height="6.00" fill="#0f1417"/>
<rect x="860.37" y="506.80" width="8.00" height="6.00" fill="#0f1417"/>
<rect x="881.87" y="506.80" width="13.40" height="6.00" fill="#0f1417"/>
<rect x="917.27" y="506.80" width="10.20" height="6.00" fill="#0f1417"/>
<rect x="839.37" y="574.90" width="13.50" height="6.00" fill="#0f1417"/>
<rect x="860.37" y="574.90" width="8.00" height="6.00" fill="#0f1417"/>
<rect x="881.87" y="574.90" width="13.40" height="6.00" fill="#0f1417"/>
<rect x="917.27" y="574.90" width="10.20" height="6.00" fill="#0f1417"/>
<rect x="1052.59" y="453.00" width="8.80" height="6.00" fill="#0f1417"/>
<rect x="1045.09" y="468.50" width="9.90" height="6.00" fill="#0f1417"/>
<rect x="1052.59" y="521.30" width="8.80" height="6.00" fill="#0f1417"/>
<rect x="1045.09" y="536.70" width="9.90" height="6.00" fill="#0f1417"/>
<rect x="953.09" y="506.80" width="13.50" height="6.00" fill="#0f1417"/>
<rect x="974.09" y="506.80" width="8.00" height="6.00" fill="#0f1417"/>
<rect x="995.59" y="506.80" width="13.40" height="6.00" fill="#0f1417"/>
<rect x="1030.99" y="506.80" width="10.20" height="6.00" fill="#0f1417"/>
<rect x="953.09" y="574.90" width="13.50" height="6.00" fill="#0f1417"/>
<rect x="974.09" y="574.90" width="8.00" height="6.00" fill="#0f1417"/>
<rect x="995.59" y="574.90" width="13.40" height="6.00" fill="#0f1417"/>
<rect x="1030.99" y="574.90" width="10.20" height="6.00" fill="#0f1417"/>
<rect x="1166.31" y="453.00" width="8.80" height="6.00" fill="#0f1417"/>
<rect x="1158.81" y="468.50" width="9.90" height="6.00" fill="#0f1417"/>
<rect x="1166.31" y="521.30" width="8.80" height="6.00" fill="#0f1417"/>
<rect x="1158.81" y="536.70" width="9.90" height="6.00" fill="#0f1417"/>
<rect x="1066.81" y="506.80" width="13.50" height="6.00" fill="#0f1417"/>
<rect x="1087.81" y="506.80" width="8.00" height="6.00" fill="#0f1417"/>
<rect x="1109.31" y="506.80" width="13.40" height="6.00" fill="#0f1417"/>
<rect x="1144.71" y="506.80" width="10.20" height="6.00" fill="#0f1417"/>
<rect x="1066.81" y="574.90" width="13.50" height="6.00" fill="#0f1417"/>
<rect x="1087.81" y="574.90" width="8.00" height="6.00" fill="#0f1417"/>
<rect x="1109.31" y="574.90" width="13.40" height="6.00" fill="#0f1417"/>
<rect x="1144.71" y="574.90" width="10.20" height="6.00" fill="#0f1417"/>
<rect x="1280.03" y="453.00" width="8.80" height="6.00" fill="#0f1417"/>
<rect x="1272.53" y="468.50" width="9.90" height="6.00" fill="#0f1417"/>
<rect x="1280.03" y="521.30" width="8.80" height="6.00" fill="#0f1417"/>
<rect x="1272.53" y="536.70" width="9.90" height="6.00" fill="#0f1417"/>
<rect x="1180.53" y="506.80" width="13.50" height="6.00" fill="#0f1417"/>
<rect x="1201.53" y="506.80" width="8.00" height="6.00" fill="#0f1417"/>
<rect x="1223.03" y="506.80" width="13.40" height="6.00" fill="#0f1417"/>
<rect x="1258.43" y="506.80" width="10.20" height="6.00" fill="#0f1417"/>
<rect x="1180.53" y="574.90" width="13.50" height="6.00" fill="#0f1417"/>
<rect x="1201.53" y="574.90" width="8.00" height="6.00" fill="#0f1417"/>
<rect x="1223.03" y="574.90" width="13.40" height="6.00" fill="#0f1417"/>
<rect x="1258.43" y="574.90" width="10.20" height="6.00" fill="#0f1417"/>
<rect x="1393.75" y="453.00" width="8.80" height="6.00" fill="#0f1417"/>
<rect x="1386.25" y="468.50" width="9.90" height="6.00" fill="#0f1417"/>
<rect x="1393.75" y="521.30" width="8.80" height="6.00" fill="#0f1417"/>
<rect x="1386.25" y="536.70" width="9.90" height="6.00" fill="#0f1417"/>
<rect x="1294.25" y="506.80" width="13.50" height="6.00" fill="#0f1417"/>
<rect x="1315.25" y="506.80" width="8.00" height="6.00" fill="#0f1417"/>
<rect x="1336.75" y="506.80" width="13.40" height="6.00" fill="#0f1417"/>
<rect x="1372.15" y="506.80" width="10.20" height="6.00" fill="#0f1417"/>
<rect x="1294.25" y="574.90" width="13.50" height="6.00" fill="#0f1417"/>
<rect x="1315.25" y="574.90" width="8.00" height="6.00" fill="#0f1417"/>
<rect x="1336.75" y="574.90" width="13.40" height="6.00" fill="#0f1417"/>
<rect x="1372.15" y="574.90" width="10.20" height="6.00" fill="#0f1417"/>
<rect x="1507.47" y="453.00" width="8.80" height="6.00" fill="#0f1417"/>
<rect x="1499.97" y="468.50" width="9.90" height="6.00" fill="#0f1417"/>
<rect x="1507.47" y="521.30" width="8.80" height="6.00" fill="#0f1417"/>
<rect x="1499.97" y="536.70" width="9.90" height="6.00" fill="#0f1417"/>
<rect x="1407.97" y="506.80" width="13.50" height="6.00" fill="#0f1417"/>
<rect x="1428.97" y="506.80" width="8.00" height="6.00" fill="#0f1417"/>
<rect x="1450.47" y="506.80" width="13.40" height="6.00" fill="#0f1417"/>
<rect x="1485.87" y="506.80" width="10.20" height="6.00" fill="#0f1417"/>
<rect x="1407.97" y="574.90" width="13.50" height="6.00" fill="#0f1417"/>
<rect x="1428.97" y="574.90" width="8.00" height="6.00" fill="#0f1417"/>
<rect x="1450.47" y="574.90" width="13.40" height="6.00" fill="#0f1417"/>
<rect x="1485.87" y="574.90" width="10.20" height="6.00" fill="#0f1417"/>
<rect x="1621.19" y="453.00" width="8.80" height="6.00" fill="#0f1417"/>
<rect x="1613.69" y="468.50" width="9.90" height="6.00" fill="#0f1417"/>
<rect x="1621.19" y="521.30" width="8.80" height="6.00" fill="#0f1417"/>
<rect x="1613.69" y="536.70" width="9.90" height="6.00" fill="#0f1417"/>
<rect x="1521.69" y="506.80" width="13.50" height="6.00" fill="#0f1417"/>
<rect x="1542.69" y="506.80" width="8.00" height="6.00" fill="#0f1417"/>
<rect x="1564.19" y="506.80" width="13.40" height="6.00" fill="#0f1417"/>
<rect x="1599.59" y="506.80" width="10.20" height="6.00" fill="#0f1417"/>
<rect x="1521.69" y="574.90" width="13.50" height="6.00" fill="#0f1417"/>
<rect x="1542.69" y="574.90" width="8.00" height="6.00" fill="#0f1417"/>
<rect x="1564.19" y="574.90" width="13.40" height="6.00" fill="#0f1417"/>
<rect x="1599.59" y="574.90" width="10.20" height="6.00" fill="#0f1417"/>
<rect x="0.00" y="584.30" width="1703.00" height="2.80" fill="#2a2a2a"/>
<rect x="0.00" y="587.10" width="1703.00" height="88.30" fill="#484848"/>
<rect x="1634.51" y="587.10" width="68.49" height="88.30" fill="#404040"/>
<rect x="0.00" y="587.10" width="611.23" height="88.30" fill="#456873"/>
<rect x="724.95" y="587.10" width="455.08" height="88.30" fill="#456873"/>
<rect x="1180.03" y="587.10" width="454.48" height="88.30" fill="#456873"/>
<rect x="0.00" y="587.10" width="1703.00" height="88.30" fill="url(#grid)"/>
<rect x="0.00" y="587.10" width="611.23" height="19.60" fill="#5bbdd2"/>
<rect x="724.95" y="587.10" width="455.08" height="19.60" fill="#5bbdd2"/>
<rect x="1180.03" y="587.10" width="454.48" height="19.60" fill="#5bbdd2"/>
<rect x="1179.53" y="587.10" width="1.00" height="19.60" fill="#3f93a6"/>
<text x="728.55" y="601.60" font-family='"Liberation Sans",sans-serif' font-size="11.8" font-weight="normal" fill="#1a4a56" textLength="111.5" lengthAdjust="spacingAndGlyphs" stroke="#1a4a56" stroke-width=".35">Basic Trigger Bass</text>
<text x="1183.43" y="601.60" font-family='"Liberation Sans",sans-serif' font-size="11.8" font-weight="normal" fill="#1a4a56" textLength="111.5" lengthAdjust="spacingAndGlyphs" stroke="#1a4a56" stroke-width=".35">Basic Trigger Bass</text>
<rect x="-20.89" y="635.80" width="7.20" height="10.40" fill="#0f1417"/>
<rect x="-6.59" y="635.80" width="8.40" height="10.40" fill="#0f1417"/>
<rect x="92.83" y="635.80" width="7.20" height="10.40" fill="#0f1417"/>
<rect x="107.13" y="635.80" width="8.40" height="10.40" fill="#0f1417"/>
<rect x="206.55" y="635.80" width="7.20" height="10.40" fill="#0f1417"/>
<rect x="220.85" y="635.80" width="8.40" height="10.40" fill="#0f1417"/>
<rect x="320.27" y="635.80" width="7.20" height="10.40" fill="#0f1417"/>
<rect x="334.57" y="635.80" width="8.40" height="10.40" fill="#0f1417"/>
<rect x="433.99" y="635.80" width="7.20" height="10.40" fill="#0f1417"/>
<rect x="448.29" y="635.80" width="8.40" height="10.40" fill="#0f1417"/>
<rect x="547.71" y="635.80" width="7.20" height="10.40" fill="#0f1417"/>
<rect x="562.01" y="635.80" width="8.40" height="10.40" fill="#0f1417"/>
<rect x="775.15" y="635.80" width="7.20" height="10.40" fill="#0f1417"/>
<rect x="789.45" y="635.80" width="8.40" height="10.40" fill="#0f1417"/>
<rect x="888.87" y="635.80" width="7.20" height="10.40" fill="#0f1417"/>
<rect x="903.17" y="635.80" width="8.40" height="10.40" fill="#0f1417"/>
<rect x="1002.59" y="635.80" width="7.20" height="10.40" fill="#0f1417"/>
<rect x="1016.89" y="635.80" width="8.40" height="10.40" fill="#0f1417"/>
<rect x="1116.31" y="635.80" width="7.20" height="10.40" fill="#0f1417"/>
<rect x="1130.61" y="635.80" width="8.40" height="10.40" fill="#0f1417"/>
<rect x="1230.03" y="635.80" width="7.20" height="10.40" fill="#0f1417"/>
<rect x="1244.33" y="635.80" width="8.40" height="10.40" fill="#0f1417"/>
<rect x="1343.75" y="635.80" width="7.20" height="10.40" fill="#0f1417"/>
<rect x="1358.05" y="635.80" width="8.40" height="10.40" fill="#0f1417"/>
<rect x="1457.47" y="635.80" width="7.20" height="10.40" fill="#0f1417"/>
<rect x="1471.77" y="635.80" width="8.40" height="10.40" fill="#0f1417"/>
<rect x="1571.19" y="635.80" width="7.20" height="10.40" fill="#0f1417"/>
<rect x="1585.49" y="635.80" width="8.40" height="10.40" fill="#0f1417"/>
<path d="M0 649.5H1700.0" stroke="#c55c46" stroke-width="1.8" stroke-dasharray="3.6 4.1" opacity=".78"/>
<rect x="0.00" y="675.40" width="1705.40" height="9.40" fill="#2a2a2a"/>
<path d="M0 212.2H668.7V243.4H1703.0" fill="none" stroke="#dc6248" stroke-width="1.7"/>
<circle cx="668.1" cy="243.4" r="2.6" fill="#474747" stroke="#dc6248" stroke-width="1.3"/>
<circle cx="211.8" cy="212.2" r="2.4" fill="none" stroke="#dc6248" stroke-width="1.2"/>
<path d="M0 534.8H668.7V566.0H1703.0" fill="none" stroke="#dc6248" stroke-width="1.7"/>
<circle cx="668.1" cy="566.0" r="2.6" fill="#5a5a5a" stroke="#dc6248" stroke-width="1.3"/>
<circle cx="211.8" cy="534.8" r="2.4" fill="none" stroke="#dc6248" stroke-width="1.2"/>
<rect x="0.00" y="684.80" width="1703.00" height="22.00" fill="#454545"/>
<rect x="0.00" y="684.80" width="1703.00" height="22.00" fill="url(#grid)"/>
</g>
<rect x="1703.00" y="108.70" width="2.40" height="598.00" fill="#222222"/>
<rect x="1709.3" y="107.6" width="35.0" height="14.8" rx="7.4" fill="#262626" stroke="#141414" stroke-width="1.3"/>
<text x="1716.80" y="119.30" font-family='"Liberation Sans",sans-serif' font-size="12.2" font-weight="bold" fill="#d6d6d6" textLength="21.9" lengthAdjust="spacingAndGlyphs">Set</text>
<circle cx="1716.0" cy="134.6" r="7.6" fill="#222222" stroke="#141414" stroke-width="1.3"/>
<path d="M1720.60 133.5h-4.40v-2.5l-4.80 3.6 4.80 3.6v-2.5h4.40z" fill="#e2e2e2"/>
<circle cx="1737.6" cy="134.6" r="7.6" fill="#222222" stroke="#141414" stroke-width="1.3"/>
<path d="M1733.00 133.5h4.40v-2.5l4.80 3.6 -4.80 3.6v-2.5h-4.40z" fill="#e2e2e2"/>
<rect x="1761.40" y="126.60" width="28.30" height="15.30" fill="#55b4cf"/>
<path d="M1771.6 137.8l7.4-6.2" stroke="#16242a" stroke-width="1.6"/><circle cx="1771.8" cy="137.6" r="1.9" fill="#16242a"/><circle cx="1779.0" cy="131.6" r="1.9" fill="#16242a"/>
<rect x="1795.30" y="126.60" width="6.00" height="15.30" fill="#303030"/>
<rect x="1705.40" y="149.30" width="94.60" height="111.90" fill="#6c6c6c"/>
<rect x="1705.40" y="149.30" width="94.60" height="21.60" fill="#d3d3d3"/>
<circle cx="1717.4" cy="160.3" r="7.6" fill="none" stroke="#3c3c3c" stroke-width="1.2"/>
<path d="M1713.8 158.7h7.2l-3.6 4.6z" fill="#3c3c3c"/>
<text x="1734.60" y="164.90" font-family='"Liberation Sans",sans-serif' font-size="12.4" font-weight="bold" fill="#353535" textLength="27.1" lengthAdjust="spacingAndGlyphs">Kick</text>
<rect x="1708.00" y="171.60" width="94.60" height="1.20" fill="#4e4e4e"/>
<rect x="1709.20" y="173.80" width="92.80" height="16.20" fill="#2c2c2c"/>
<text x="1724.40" y="186.40" font-family='"Liberation Sans",sans-serif' font-size="12.2" font-weight="bold" fill="#dddddd" textLength="31.7" lengthAdjust="spacingAndGlyphs">None</text>
<text x="1710.80" y="211.20" font-family='"Liberation Sans",sans-serif' font-size="12.3" font-weight="normal" fill="#343434" stroke="#343434" stroke-width=".3" textLength="51.6" lengthAdjust="spacingAndGlyphs">EQ Eight</text>
<text x="1710.80" y="230.00" font-family='"Liberation Sans",sans-serif' font-size="12.3" font-weight="normal" fill="#343434" stroke="#343434" stroke-width=".3" textLength="61.0" lengthAdjust="spacingAndGlyphs">Device On</text>
<rect x="1705.40" y="261.20" width="94.60" height="2.60" fill="#2a2a2a"/>
<rect x="1705.40" y="263.80" width="94.60" height="21.80" fill="#8a4a9f"/>
<circle cx="1717.4" cy="274.7" r="7.6" fill="none" stroke="#4b2060" stroke-width="1.2"/>
<path d="M1715.2 271.2l5.6 3.5-5.6 3.5z" fill="#3f1a52"/>
<text x="1735.00" y="279.20" font-family='"Liberation Sans",sans-serif' font-size="12.2" font-weight="bold" fill="#351546" textLength="32.6" lengthAdjust="spacingAndGlyphs">CLAP</text>
<rect x="1705.40" y="285.60" width="94.60" height="2.50" fill="#2a2a2a"/>
<rect x="1705.40" y="288.10" width="94.60" height="22.10" fill="#c8695a"/>
<circle cx="1717.4" cy="299.2" r="7.6" fill="none" stroke="#8e3a2e" stroke-width="1.2"/>
<circle cx="1717.4" cy="299.2" r="3.8" fill="none" stroke="#8e3a2e" stroke-width="1.0"/>
<rect x="1715.40" y="297.80" width="4.00" height="1.00" fill="#8e3a2e"/>
<rect x="1715.40" y="299.90" width="4.00" height="1.00" fill="#8e3a2e"/>
<text x="1735.00" y="303.70" font-family='"Liberation Sans",sans-serif' font-size="12.2" font-weight="bold" fill="#3d1712" textLength="30.9" lengthAdjust="spacingAndGlyphs">HATS</text>
<rect x="1705.40" y="310.20" width="94.60" height="2.60" fill="#2a2a2a"/>
<rect x="1705.40" y="312.80" width="94.60" height="21.70" fill="#b8d638"/>
<circle cx="1717.4" cy="323.8" r="7.6" fill="none" stroke="#6f8a1e" stroke-width="1.2"/>
<circle cx="1717.4" cy="323.8" r="3.8" fill="none" stroke="#6f8a1e" stroke-width="1.0"/>
<rect x="1715.40" y="322.40" width="4.00" height="1.00" fill="#6f8a1e"/>
<rect x="1715.40" y="324.50" width="4.00" height="1.00" fill="#6f8a1e"/>
<text x="1735.00" y="328.40" font-family='"Liberation Sans",sans-serif' font-size="12.2" font-weight="bold" fill="#34430c" textLength="56.2" lengthAdjust="spacingAndGlyphs">PERCUSS</text>
<rect x="1705.40" y="334.50" width="94.60" height="2.50" fill="#2a2a2a"/>
<rect x="1705.40" y="337.00" width="94.60" height="338.60" fill="#5dc3d9"/>
<rect x="1711.50" y="358.40" width="94.60" height="67.60" fill="#44737f"/>
<rect x="1711.50" y="358.00" width="94.60" height="1.40" fill="#2f5560"/>
<circle cx="1717.6" cy="347.6" r="7.6" fill="none" stroke="#267c90" stroke-width="1.2"/>
<path d="M1714.2 345.3h3.6c2 0 3.2 1.2 3.2 3.2v2.4" stroke="#267c90" stroke-width="1.2" fill="none"/><path d="M1714 348.2h3.4v3" stroke="#267c90" stroke-width="1.1" fill="none"/>
<text x="1735.00" y="352.20" font-family='"Liberation Sans",sans-serif' font-size="12.2" font-weight="bold" fill="#133f4b" textLength="30.2" lengthAdjust="spacingAndGlyphs">BASS</text>
<rect x="1714.90" y="362.40" width="87.10" height="15.00" fill="#2c2c2c"/>
<text x="1729.60" y="373.80" font-family='"Liberation Sans",sans-serif' font-size="12.2" font-weight="bold" fill="#dddddd" textLength="33.1" lengthAdjust="spacingAndGlyphs">Mixer</text>
<rect x="1714.90" y="384.60" width="87.10" height="14.40" fill="#2c2c2c"/>
<text x="1729.60" y="395.40" font-family='"Liberation Sans",sans-serif' font-size="12.2" font-weight="bold" fill="#dddddd" textLength="70.5" lengthAdjust="spacingAndGlyphs">Speaker On</text>
<rect x="1711.50" y="426.00" width="94.60" height="2.80" fill="#2c4b54"/>
<rect x="1711.50" y="450.00" width="94.60" height="134.30" fill="#44737f"/>
<circle cx="1724.0" cy="439.3" r="7.6" fill="none" stroke="#1f5f70" stroke-width="1.2"/>
<path d="M1720.4 437.7h7.2l-3.6 4.6z" fill="#1f5f70"/>
<text x="1740.80" y="443.90" font-family='"Liberation Sans",sans-serif' font-size="12.2" font-weight="bold" fill="#153e4a" textLength="45.2" lengthAdjust="spacingAndGlyphs">10 Diva</text>
<rect x="1711.50" y="450.00" width="94.60" height="1.30" fill="#33606c"/>
<rect x="1714.90" y="453.00" width="87.10" height="14.80" fill="#2c2c2c"/>
<text x="1729.60" y="464.20" font-family='"Liberation Sans",sans-serif' font-size="12.2" font-weight="bold" fill="#dddddd" textLength="31.7" lengthAdjust="spacingAndGlyphs">None</text>
<rect x="1715.6" y="476.6" width="90" height="14.2" fill="#3f6d79" stroke="#27434b" stroke-width="1.3"/>
<circle cx="1725.0" cy="506.0" r="6.6" fill="#252a2c"/><path d="M1721.2 503.4h7.6l-3.8 5.4z" fill="#e6e6e6"/>
<text x="1716.50" y="533.40" font-family='"Liberation Sans",sans-serif' font-size="12.3" font-weight="normal" fill="#23444d" stroke="#23444d" stroke-width=".3" textLength="51.6" lengthAdjust="spacingAndGlyphs">EQ Eight</text>
<text x="1716.50" y="552.40" font-family='"Liberation Sans",sans-serif' font-size="12.3" font-weight="normal" fill="#23444d" stroke="#23444d" stroke-width=".3" textLength="61.0" lengthAdjust="spacingAndGlyphs">Device On</text>
<rect x="1711.50" y="584.30" width="94.60" height="2.80" fill="#2c4b54"/>
<rect x="1711.50" y="607.80" width="94.60" height="67.80" fill="#44737f"/>
<circle cx="1724.0" cy="597.4" r="7.6" fill="none" stroke="#1f5f70" stroke-width="1.2"/>
<path d="M1720.4 595.8h7.2l-3.6 4.6z" fill="#1f5f70"/>
<text x="1740.80" y="602.00" font-family='"Liberation Sans",sans-serif' font-size="12.2" font-weight="bold" fill="#153e4a" textLength="131.2" lengthAdjust="spacingAndGlyphs">11 Basic Trigger Bass</text>
<rect x="1711.50" y="607.80" width="94.60" height="1.30" fill="#33606c"/>
<rect x="1714.90" y="611.50" width="87.10" height="15.50" fill="#2c2c2c"/>
<text x="1729.60" y="623.40" font-family='"Liberation Sans",sans-serif' font-size="12.2" font-weight="bold" fill="#dddddd" textLength="114.2" lengthAdjust="spacingAndGlyphs">Basic Trigger Bass</text>
<rect x="1714.90" y="633.60" width="87.10" height="15.10" fill="#2c2c2c"/>
<text x="1729.60" y="645.10" font-family='"Liberation Sans",sans-serif' font-size="12.2" font-weight="bold" fill="#dddddd" textLength="40.2" lengthAdjust="spacingAndGlyphs">Hi End</text>
<rect x="1705.40" y="675.50" width="94.60" height="1.90" fill="#2a2a2a"/>
<rect x="1705.40" y="677.40" width="94.60" height="4.00" fill="#c38f63"/>
<rect x="1705.40" y="681.40" width="94.60" height="3.20" fill="#2a2a2a"/>
<rect x="1705.40" y="684.60" width="94.60" height="22.00" fill="#b8865a"/>
<circle cx="1717.4" cy="695.8" r="7.6" fill="none" stroke="#6c4a2a" stroke-width="1.2"/>
<path d="M1715.3 692.4l5.4 3.4-5.4 3.4z" fill="#6c4a2a"/>
<text x="1738.30" y="700.20" font-family='"Liberation Sans",sans-serif' font-size="12.0" font-weight="bold" fill="#4a3018" textLength="43.5" lengthAdjust="spacingAndGlyphs">Master</text>
<text x="1662.50" y="705.40" font-family='"Liberation Sans",sans-serif' font-size="22.5" font-weight="bold" fill="#2c2c2c" textLength="37.5" lengthAdjust="spacingAndGlyphs">1/4</text>
<rect x="0.00" y="706.80" width="1800.00" height="20.80" fill="#262626"/>
<rect x="11.08" y="706.80" width="1.00" height="2.40" fill="#505050"/>
<rect x="40.71" y="706.80" width="1.00" height="2.40" fill="#505050"/>
<rect x="70.24" y="706.80" width="1.30" height="9.60" fill="#9a9a9a"/>
<rect x="99.97" y="706.80" width="1.00" height="2.40" fill="#505050"/>
<rect x="129.60" y="706.80" width="1.00" height="2.40" fill="#505050"/>
<rect x="159.23" y="706.80" width="1.00" height="2.40" fill="#505050"/>
<rect x="188.76" y="706.80" width="1.30" height="9.60" fill="#9a9a9a"/>
<rect x="218.49" y="706.80" width="1.00" height="2.40" fill="#505050"/>
<rect x="248.12" y="706.80" width="1.00" height="2.40" fill="#505050"/>
<rect x="277.75" y="706.80" width="1.00" height="2.40" fill="#505050"/>
<rect x="307.28" y="706.80" width="1.30" height="9.60" fill="#9a9a9a"/>
<rect x="337.01" y="706.80" width="1.00" height="2.40" fill="#505050"/>
<rect x="366.64" y="706.80" width="1.00" height="2.40" fill="#505050"/>
<rect x="396.27" y="706.80" width="1.00" height="2.40" fill="#505050"/>
<rect x="425.80" y="706.80" width="1.30" height="9.60" fill="#9a9a9a"/>
<text x="430.00" y="720.40" font-family='"Liberation Sans",sans-serif' font-size="11.8" font-weight="normal" fill="#b2b2b2" textLength="25.7" lengthAdjust="spacingAndGlyphs">0:18</text>
<rect x="455.53" y="706.80" width="1.00" height="2.40" fill="#505050"/>
<rect x="485.16" y="706.80" width="1.00" height="2.40" fill="#505050"/>
<rect x="514.79" y="706.80" width="1.00" height="2.40" fill="#505050"/>
<rect x="544.32" y="706.80" width="1.30" height="9.60" fill="#9a9a9a"/>
<text x="548.52" y="720.40" font-family='"Liberation Sans",sans-serif' font-size="11.8" font-weight="normal" fill="#b2b2b2" textLength="25.7" lengthAdjust="spacingAndGlyphs">0:20</text>
<rect x="574.05" y="706.80" width="1.00" height="2.40" fill="#505050"/>
<rect x="603.68" y="706.80" width="1.00" height="2.40" fill="#505050"/>
<rect x="633.31" y="706.80" width="1.00" height="2.40" fill="#505050"/>
<rect x="662.84" y="706.80" width="1.30" height="9.60" fill="#9a9a9a"/>
<text x="667.04" y="720.40" font-family='"Liberation Sans",sans-serif' font-size="11.8" font-weight="normal" fill="#b2b2b2" textLength="25.7" lengthAdjust="spacingAndGlyphs">0:22</text>
<rect x="692.57" y="706.80" width="1.00" height="2.40" fill="#505050"/>
<rect x="722.20" y="706.80" width="1.00" height="2.40" fill="#505050"/>
<rect x="751.83" y="706.80" width="1.00" height="2.40" fill="#505050"/>
<rect x="781.36" y="706.80" width="1.30" height="9.60" fill="#9a9a9a"/>
<text x="785.56" y="720.40" font-family='"Liberation Sans",sans-serif' font-size="11.8" font-weight="normal" fill="#b2b2b2" textLength="25.7" lengthAdjust="spacingAndGlyphs">0:24</text>
<rect x="811.09" y="706.80" width="1.00" height="2.40" fill="#505050"/>
<rect x="840.72" y="706.80" width="1.00" height="2.40" fill="#505050"/>
<rect x="870.35" y="706.80" width="1.00" height="2.40" fill="#505050"/>
<rect x="899.88" y="706.80" width="1.30" height="9.60" fill="#9a9a9a"/>
<text x="904.08" y="720.40" font-family='"Liberation Sans",sans-serif' font-size="11.8" font-weight="normal" fill="#b2b2b2" textLength="25.7" lengthAdjust="spacingAndGlyphs">0:26</text>
<rect x="929.61" y="706.80" width="1.00" height="2.40" fill="#505050"/>
<rect x="959.24" y="706.80" width="1.00" height="2.40" fill="#505050"/>
<rect x="988.87" y="706.80" width="1.00" height="2.40" fill="#505050"/>
<rect x="1018.40" y="706.80" width="1.30" height="9.60" fill="#9a9a9a"/>
<text x="1022.60" y="720.40" font-family='"Liberation Sans",sans-serif' font-size="11.8" font-weight="normal" fill="#b2b2b2" textLength="25.7" lengthAdjust="spacingAndGlyphs">0:28</text>
<rect x="1048.13" y="706.80" width="1.00" height="2.40" fill="#505050"/>
<rect x="1077.76" y="706.80" width="1.00" height="2.40" fill="#505050"/>
<rect x="1107.39" y="706.80" width="1.00" height="2.40" fill="#505050"/>
<rect x="1136.92" y="706.80" width="1.30" height="9.60" fill="#9a9a9a"/>
<text x="1141.12" y="720.40" font-family='"Liberation Sans",sans-serif' font-size="11.8" font-weight="normal" fill="#b2b2b2" textLength="25.7" lengthAdjust="spacingAndGlyphs">0:30</text>
<rect x="1166.65" y="706.80" width="1.00" height="2.40" fill="#505050"/>
<rect x="1196.28" y="706.80" width="1.00" height="2.40" fill="#505050"/>
<rect x="1225.91" y="706.80" width="1.00" height="2.40" fill="#505050"/>
<rect x="1255.44" y="706.80" width="1.30" height="9.60" fill="#9a9a9a"/>
<text x="1259.64" y="720.40" font-family='"Liberation Sans",sans-serif' font-size="11.8" font-weight="normal" fill="#b2b2b2" textLength="25.7" lengthAdjust="spacingAndGlyphs">0:32</text>
<rect x="1285.17" y="706.80" width="1.00" height="2.40" fill="#505050"/>
<rect x="1314.80" y="706.80" width="1.00" height="2.40" fill="#505050"/>
<rect x="1344.43" y="706.80" width="1.00" height="2.40" fill="#505050"/>
<rect x="1373.96" y="706.80" width="1.30" height="9.60" fill="#9a9a9a"/>
<text x="1378.16" y="720.40" font-family='"Liberation Sans",sans-serif' font-size="11.8" font-weight="normal" fill="#b2b2b2" textLength="25.7" lengthAdjust="spacingAndGlyphs">0:34</text>
<rect x="1403.69" y="706.80" width="1.00" height="2.40" fill="#505050"/>
<rect x="1433.32" y="706.80" width="1.00" height="2.40" fill="#505050"/>
<rect x="1462.95" y="706.80" width="1.00" height="2.40" fill="#505050"/>
<rect x="1492.48" y="706.80" width="1.30" height="9.60" fill="#9a9a9a"/>
<text x="1496.68" y="720.40" font-family='"Liberation Sans",sans-serif' font-size="11.8" font-weight="normal" fill="#b2b2b2" textLength="25.7" lengthAdjust="spacingAndGlyphs">0:36</text>
<rect x="1522.21" y="706.80" width="1.00" height="2.40" fill="#505050"/>
<rect x="1551.84" y="706.80" width="1.00" height="2.40" fill="#505050"/>
<rect x="1581.47" y="706.80" width="1.00" height="2.40" fill="#505050"/>
<rect x="1611.00" y="706.80" width="1.30" height="9.60" fill="#9a9a9a"/>
<text x="1615.20" y="720.40" font-family='"Liberation Sans",sans-serif' font-size="11.8" font-weight="normal" fill="#b2b2b2" textLength="25.7" lengthAdjust="spacingAndGlyphs">0:38</text>
<rect x="1640.73" y="706.80" width="1.00" height="2.40" fill="#505050"/>
<rect x="1670.36" y="706.80" width="1.00" height="2.40" fill="#505050"/>
<rect x="1699.99" y="706.80" width="1.00" height="2.40" fill="#505050"/>
<rect x="0.00" y="727.60" width="1800.00" height="11.00" fill="#343434"/>
<rect x="0.00" y="738.60" width="1800.00" height="1.80" fill="#2a2a2a"/>
<rect x="0.00" y="740.40" width="1800.00" height="1.80" fill="#202020"/>
<rect x="0.00" y="742.20" width="1800.00" height="1.60" fill="#181818"/>
<rect x="0.00" y="743.60" width="1800.00" height="182.40" fill="#111111"/>
<rect x="0.00" y="926.00" width="1800.00" height="1.60" fill="#1c1c1c"/>
<rect x="0.00" y="927.60" width="1800.00" height="1.60" fill="#282828"/>
<rect x="0.00" y="929.20" width="1800.00" height="9.80" fill="#343434"/>
<rect x="0.00" y="939.00" width="1800.00" height="6.00" fill="#232323"/>
<rect x="45.22" y="743.60" width="1.40" height="182.40" fill="#212121"/>
<rect x="135.22" y="743.60" width="1.40" height="182.40" fill="#212121"/>
<rect x="205.04" y="743.60" width="1.40" height="182.40" fill="#212121"/>
<rect x="262.08" y="743.60" width="1.40" height="182.40" fill="#212121"/>
<rect x="310.31" y="743.60" width="1.40" height="182.40" fill="#212121"/>
<rect x="352.09" y="743.60" width="1.40" height="182.40" fill="#212121"/>
<rect x="388.94" y="743.60" width="1.40" height="182.40" fill="#212121"/>
<rect x="421.90" y="743.60" width="1.40" height="182.40" fill="#303030"/>
<rect x="638.76" y="743.60" width="1.40" height="182.40" fill="#212121"/>
<rect x="765.62" y="743.60" width="1.40" height="182.40" fill="#212121"/>
<rect x="855.62" y="743.60" width="1.40" height="182.40" fill="#212121"/>
<rect x="925.44" y="743.60" width="1.40" height="182.40" fill="#212121"/>
<rect x="982.48" y="743.60" width="1.40" height="182.40" fill="#212121"/>
<rect x="1030.71" y="743.60" width="1.40" height="182.40" fill="#212121"/>
<rect x="1072.49" y="743.60" width="1.40" height="182.40" fill="#212121"/>
<rect x="1109.34" y="743.60" width="1.40" height="182.40" fill="#212121"/>
<rect x="1142.30" y="743.60" width="1.40" height="182.40" fill="#303030"/>
<rect x="1359.16" y="743.60" width="1.40" height="182.40" fill="#212121"/>
<rect x="1486.02" y="743.60" width="1.40" height="182.40" fill="#212121"/>
<rect x="1576.02" y="743.60" width="1.40" height="182.40" fill="#212121"/>
<rect x="1645.84" y="743.60" width="1.40" height="182.40" fill="#212121"/>
<rect x="1702.88" y="743.60" width="1.40" height="182.40" fill="#212121"/>
<rect x="1751.11" y="743.60" width="1.40" height="182.40" fill="#212121"/>
<rect x="1792.89" y="743.60" width="1.40" height="182.40" fill="#212121"/>
<rect x="0.00" y="761.50" width="1800.00" height="1.40" fill="#1f1f1f"/>
<rect x="0.00" y="797.80" width="1800.00" height="1.40" fill="#1f1f1f"/>
<rect x="0.00" y="869.50" width="1800.00" height="1.40" fill="#1f1f1f"/>
<rect x="0.00" y="906.20" width="1800.00" height="1.40" fill="#1f1f1f"/>
<rect x="0.00" y="832.90" width="1800.00" height="1.70" fill="#787878"/>
<path d="M-5.0 834.2C20.8 834.2 99.2 834.2 150.0 834.2C200.8 834.2 263.3 834.2 300.0 834.2C336.7 834.2 355.3 834.2 370.0 834.3C384.7 834.4 382.7 834.6 388.0 835.0C393.3 835.4 396.2 835.8 402.0 836.7C407.8 837.6 414.5 838.9 423.0 840.5C431.5 842.1 442.0 844.5 453.0 846.6C464.0 848.7 480.7 851.8 489.0 853.3C497.3 854.8 499.3 854.9 503.0 855.3C506.7 855.7 508.0 855.9 511.0 855.9C514.0 855.9 516.2 856.0 521.0 855.1C525.8 854.2 533.5 852.0 540.0 850.4C546.5 848.8 550.7 847.2 560.0 845.3C569.3 843.4 583.0 840.6 596.0 839.1C609.0 837.6 624.0 837.0 638.0 836.4C652.0 835.8 666.3 835.5 680.0 835.2C693.7 834.9 700.0 834.9 720.0 834.7C740.0 834.6 770.0 834.4 800.0 834.3C830.0 834.2 732.5 834.2 900.0 834.2C1067.5 834.2 1654.2 834.2 1805.0 834.2" fill="none" stroke="#4d8ca5" stroke-width="2.2"/>
<circle cx="511" cy="853.4" r="8.4" fill="#e0993a"/>
<text x="507.90" y="857.30" font-family='"Liberation Sans",sans-serif' font-size="10.6" font-weight="bold" fill="#3a2a12" textLength="6.6" lengthAdjust="spacingAndGlyphs">2</text>
<circle cx="1141.0" cy="834.2" r="7.4" fill="#111" fill-opacity=".35" stroke="#d18d33" stroke-width="2.3"/>
<text x="1138.40" y="837.60" font-family='"Liberation Sans",sans-serif' font-size="9.5" font-weight="bold" fill="#8b6a34" opacity=".8" textLength="5.9" lengthAdjust="spacingAndGlyphs">6</text>
<circle cx="1641.2" cy="834.2" r="7.4" fill="#111" fill-opacity=".35" stroke="#d18d33" stroke-width="2.3"/>
<text x="1638.60" y="837.60" font-family='"Liberation Sans",sans-serif' font-size="9.5" font-weight="bold" fill="#8b6a34" opacity=".8" textLength="5.9" lengthAdjust="spacingAndGlyphs">7</text>
<text x="411.00" y="921.20" font-family='"Liberation Sans",sans-serif' font-size="11.4" font-weight="normal" fill="#8a8a8a" textLength="21.3" lengthAdjust="spacingAndGlyphs">100</text>
<text x="1134.60" y="921.20" font-family='"Liberation Sans",sans-serif' font-size="11.4" font-weight="normal" fill="#8a8a8a" textLength="13.5" lengthAdjust="spacingAndGlyphs">1k</text>
<path transform="translate(71.70 71.63) scale(0.13395)" fill="#ffffff" d="M1033.05,324.45c-0.19-137.9-107.59-250.92-233.6-291.7c-156.48-50.64-362.86-43.3-512.28,27.2C106.07,145.41,49.18,332.61,47.06,519.31c-1.74,153.5,13.58,557.79,241.62,560.67c169.44,2.15,194.67-216.18,273.07-321.33c55.78-74.81,127.6-95.94,216.01-117.82C929.71,603.22,1033.27,483.3,1033.05,324.45z"/>
<g clip-path="url(#photoclip)">
<g transform="translate(72 543) scale(0.18333)">
<defs>
<linearGradient id="pbg" x1="0" y1="0" x2="0" y2="1"><stop offset="0" stop-color="#707070"/><stop offset=".35" stop-color="#868686"/><stop offset=".7" stop-color="#949494"/><stop offset="1" stop-color="#8a8a8a"/></linearGradient>
<linearGradient id="pskin" x1="0" y1="0" x2="1" y2="0"><stop offset="0" stop-color="#c4c4c4"/><stop offset=".45" stop-color="#cbcbcb"/><stop offset="1" stop-color="#a4a4a4"/></linearGradient>
<linearGradient id="pneck" x1="0" y1="0" x2="1" y2="0"><stop offset="0" stop-color="#c0c0c0"/><stop offset=".5" stop-color="#b0b0b0"/><stop offset="1" stop-color="#989898"/></linearGradient>
<linearGradient id="pshirt" x1="0" y1="0" x2="1" y2="0"><stop offset="0" stop-color="#bababa"/><stop offset=".4" stop-color="#cecece"/><stop offset="1" stop-color="#c2c2c2"/></linearGradient>
<filter id="f4" x="-30%" y="-30%" width="160%" height="160%"><feGaussianBlur stdDeviation="4"/></filter>
<filter id="f8" x="-30%" y="-30%" width="160%" height="160%"><feGaussianBlur stdDeviation="8"/></filter>
<filter id="f16" x="-30%" y="-30%" width="160%" height="160%"><feGaussianBlur stdDeviation="16"/></filter>
<filter id="f30" x="-40%" y="-40%" width="180%" height="180%"><feGaussianBlur stdDeviation="30"/></filter>
<filter id="f70" x="-60%" y="-60%" width="220%" height="220%"><feGaussianBlur stdDeviation="70"/></filter>
<clipPath id="strip"><rect x="348" y="549" width="945" height="290"/></clipPath>
<clipPath id="abovestrip"><rect x="0" y="0" width="1800" height="549"/></clipPath>
<clipPath id="belowstrip"><rect x="0" y="838" width="1800" height="1000"/></clipPath>
</defs>
<rect x="0" y="0" width="1800" height="1800" fill="url(#pbg)"/>
<ellipse cx="230" cy="980" rx="330" ry="380" fill="#a6a6a6" filter="url(#f70)"/>
<ellipse cx="60" cy="40" rx="330" ry="200" fill="#636363" filter="url(#f70)"/>
<ellipse cx="1500" cy="330" rx="330" ry="260" fill="#848484" filter="url(#f70)"/>
<ellipse cx="1570" cy="1135" rx="150" ry="70" fill="#484848" filter="url(#f70)" opacity=".9"/>
<ellipse cx="1500" cy="1400" rx="250" ry="150" fill="#acacac" filter="url(#f70)"/>
<ellipse cx="150" cy="1430" rx="260" ry="90" fill="#767676" filter="url(#f70)"/>
<path d="M612 1230C616 1330 606 1400 590 1470L1000 1680 1300 1420C1250 1380 1234 1300 1236 1160z" fill="url(#pneck)" filter="url(#f8)"/>
<path d="M640 1340C760 1450 1040 1450 1180 1310L1200 1420 900 1490 650 1420z" fill="#8e8e8e" filter="url(#f30)" opacity=".7"/>
<path d="M1060 1400C1130 1410 1200 1380 1240 1330L1262 1500 1080 1620z" fill="#868686" filter="url(#f30)" opacity=".7"/>
<path d="M-20 1510C150 1440 300 1400 420 1362 480 1340 540 1328 588 1322 640 1460 760 1560 900 1608 960 1622 1060 1622 1150 1590 1250 1510 1282 1450 1290 1392 1360 1420 1430 1480 1480 1520 1600 1560 1720 1570 1820 1580V1820H-20z" fill="url(#pshirt)" filter="url(#f8)"/>
<path d="M588 1322C640 1460 760 1560 900 1608 960 1622 1060 1622 1150 1590 1250 1510 1282 1450 1290 1392" fill="none" stroke="#8c8c8c" stroke-width="14" filter="url(#f8)"/>
<path d="M566 1330C620 1480 740 1590 890 1644 960 1660 1070 1660 1170 1624 1280 1540 1320 1470 1334 1410" fill="none" stroke="#d2d2d2" stroke-width="30" filter="url(#f8)" opacity=".8"/>
<path d="M538 1342C590 1500 740 1640 880 1690 960 1710 1080 1706 1200 1660 1310 1580 1360 1500 1378 1430" fill="none" stroke="#9c9c9c" stroke-width="9" filter="url(#f8)"/>
<path d="M1236 1392C1272 1398 1300 1430 1294 1476" fill="none" stroke="#333" stroke-width="28" filter="url(#f8)"/>
<path d="M40 1570C120 1510 220 1480 300 1450M20 1670C100 1600 170 1570 260 1530M150 1710C210 1650 270 1610 340 1580" fill="none" stroke="#8f8f8f" stroke-width="22" filter="url(#f16)"/>
<path d="M0 1524C120 1474 260 1424 400 1380" fill="none" stroke="#dadada" stroke-width="16" filter="url(#f8)"/>
<path d="M1480 1536C1600 1582 1700 1588 1800 1598" fill="none" stroke="#d6d6d6" stroke-width="18" filter="url(#f8)"/>
<path d="M1640 1660C1690 1620 1740 1600 1790 1580" fill="none" stroke="#8f8f8f" stroke-width="18" filter="url(#f16)"/>
<path d="M1300 1440C1360 1500 1420 1540 1480 1560" fill="none" stroke="#a0a0a0" stroke-width="16" filter="url(#f16)"/>
<g clip-path="url(#belowstrip)">
<path d="M542 820C545 980 560 1060 600 1160 650 1270 760 1352 900 1396 1040 1360 1150 1262 1215 1120 1250 1000 1262 900 1285 820z" fill="url(#pskin)" filter="url(#f8)"/>
<path d="M1130 850C1140 1000 1110 1150 1020 1280L1180 1200 1262 900z" fill="#8e8e8e" filter="url(#f30)" opacity=".65"/>
<path d="M596 1080C640 1040 700 1060 760 1050 820 1000 980 1000 1060 1050 1120 1060 1180 1040 1218 1080 1190 1210 1100 1330 900 1392 720 1336 630 1210 596 1080z" fill="#8a8a8a" filter="url(#f30)" opacity=".85"/>
<path d="M588 1110C630 1270 760 1376 900 1404 1040 1378 1170 1266 1222 1100 1196 1150 1160 1196 1110 1232 1050 1276 960 1296 900 1296 830 1292 750 1262 694 1206 650 1166 612 1136 588 1110z" fill="#242424" filter="url(#f16)"/>
<path d="M630 1180C700 1306 800 1378 900 1398 1010 1378 1110 1306 1180 1180 1124 1280 1000 1336 900 1338 800 1334 690 1280 630 1180z" fill="#181818" filter="url(#f8)"/>
<ellipse cx="900" cy="1262" rx="150" ry="40" fill="#8e8e8e" filter="url(#f30)" opacity=".55"/>
<path d="M738 1052C800 1012 850 1006 905 1020 960 1004 1020 1010 1084 1054 1020 1046 960 1050 905 1054 850 1050 800 1046 738 1052z" fill="#7e7e7e" filter="url(#f8)"/>
<path d="M768 1092C820 1068 870 1062 905 1072 940 1062 990 1068 1036 1092 990 1100 830 1100 768 1092z" fill="#9a9a9a" filter="url(#f4)"/>
<path d="M780 1100C850 1108 960 1108 1026 1100 990 1136 830 1136 780 1100z" fill="#b9b9b9" filter="url(#f8)"/>
<path d="M768 1094C850 1104 960 1104 1036 1094" stroke="#666" stroke-width="7" fill="none" filter="url(#f4)"/>
<ellipse cx="900" cy="1150" rx="90" ry="12" fill="#777" filter="url(#f8)" opacity=".8"/>
<ellipse cx="898" cy="1190" rx="58" ry="17" fill="#555" filter="url(#f8)"/>
<ellipse cx="905" cy="915" rx="112" ry="76" fill="#d0d0d0" filter="url(#f16)"/>
<ellipse cx="915" cy="905" rx="40" ry="30" fill="#efefef" filter="url(#f16)"/>
<path d="M800 950C830 982 870 976 900 968 940 978 980 976 1005 946" stroke="#707070" stroke-width="11" fill="none" filter="url(#f8)"/>
<ellipse cx="852" cy="966" rx="22" ry="10" fill="#3c3c3c" filter="url(#f4)"/>
<ellipse cx="968" cy="966" rx="22" ry="10" fill="#3c3c3c" filter="url(#f4)"/>
</g>
<g clip-path="url(#abovestrip)">
<path d="M505 580C498 470 518 380 560 300L650 196C710 142 800 104 900 90 980 96 1060 128 1120 170L1242 320C1278 420 1292 480 1294 580z" fill="#212121" filter="url(#f8)"/>
<path d="M590 580C588 500 592 430 612 382 640 332 680 306 740 298L1000 292C1060 296 1110 310 1150 346 1200 400 1225 480 1238 580z" fill="#b6b6b6" filter="url(#f8)"/>
<path d="M600 560C600 470 620 420 650 380" stroke="#858585" stroke-width="26" fill="none" filter="url(#f16)"/>
<path d="M1222 560C1210 470 1180 410 1130 360" stroke="#808080" stroke-width="30" fill="none" filter="url(#f16)"/>
<ellipse cx="920" cy="425" rx="210" ry="46" fill="#d8d8d8" filter="url(#f30)"/>
<path d="M690 180C800 135 950 125 1070 190" stroke="#3b3b3b" stroke-width="26" fill="none" filter="url(#f16)"/>
<path d="M640 300C720 240 840 220 960 235" stroke="#343434" stroke-width="18" fill="none" filter="url(#f16)"/>
</g>
<g clip-path="url(#strip)">
<rect x="348" y="549" width="945" height="290" fill="#8b8b8b"/>
<rect x="1130" y="549" width="170" height="290" fill="#858585"/>
<rect x="330" y="540" width="36" height="170" fill="#222" filter="url(#f8)"/>
<path d="M362 549H1128C1136 650 1138 760 1120 839H372C362 760 358 650 362 549z" fill="#a8a8a8"/>
<rect x="1112" y="540" width="26" height="190" fill="#2a2a2a" filter="url(#f8)"/>
<ellipse cx="770" cy="580" rx="200" ry="38" fill="#d2d2d2" filter="url(#f30)"/>
<ellipse cx="770" cy="800" rx="110" ry="45" fill="#c4c4c4" filter="url(#f30)"/>
<ellipse cx="560" cy="700" rx="130" ry="52" fill="#7a7a7a" filter="url(#f16)"/>
<ellipse cx="935" cy="700" rx="125" ry="52" fill="#7a7a7a" filter="url(#f16)"/>
<path d="M425 628C500 585 600 592 705 640 600 622 500 618 425 628z" fill="#5c5c5c" stroke="#5c5c5c" stroke-width="8" filter="url(#f8)"/>
<path d="M828 640C900 596 1000 590 1075 622 1000 618 900 626 828 640z" fill="#5c5c5c" stroke="#5c5c5c" stroke-width="8" filter="url(#f8)"/>
<path d="M474 704C520 682 600 684 648 716 600 736 520 736 474 704z" fill="#b4b4b4" filter="url(#f4)"/>
<path d="M854 716C900 684 970 680 1008 704 970 736 900 736 854 716z" fill="#b4b4b4" filter="url(#f4)"/>
<ellipse cx="548" cy="706" rx="24" ry="18" fill="#3c3c3c" filter="url(#f4)"/>
<ellipse cx="936" cy="706" rx="24" ry="18" fill="#3c3c3c" filter="url(#f4)"/>
<path d="M462 696C520 664 600 670 660 712" stroke="#4c4c4c" stroke-width="9" fill="none" filter="url(#f4)"/>
<path d="M842 712C900 670 970 666 1020 696" stroke="#4c4c4c" stroke-width="9" fill="none" filter="url(#f4)"/>
<ellipse cx="565" cy="786" rx="100" ry="20" fill="#b6b6b6" filter="url(#f16)"/>
<ellipse cx="930" cy="786" rx="100" ry="20" fill="#b6b6b6" filter="url(#f16)"/>
<path d="M735 640C720 720 730 790 760 839H880C860 780 850 700 860 640z" fill="#bcbcbc" filter="url(#f16)"/>
</g>
<path d="M352 690C325 680 315 720 330 760 340 800 352 820 362 835z" fill="#a4a4a4" filter="url(#f8)"/>
<path d="M1130 720C1150 720 1160 760 1146 800L1130 836z" fill="#989898" filter="url(#f8)"/>
<path d="M1085 622C1090 596 1130 600 1200 612 1300 628 1400 632 1500 640L1480 770C1380 740 1250 700 1150 676 1100 664 1082 650 1085 622z" fill="#b0b0b0" filter="url(#f8)"/>
<path d="M1100 664C1200 702 1350 742 1470 774" stroke="#747474" stroke-width="22" fill="none" filter="url(#f16)"/>
<path d="M1110 612C1200 622 1330 636 1480 644" stroke="#d6d6d6" stroke-width="14" fill="none" filter="url(#f8)"/>
<path d="M1440 700C1450 640 1520 615 1600 628 1700 640 1780 660 1830 690V1010C1780 1040 1740 1060 1690 1050 1600 1040 1480 1030 1400 980 1380 950 1400 920 1440 900 1420 840 1430 760 1440 700z" fill="#a8a8a8" filter="url(#f8)"/>
<path d="M1500 650C1450 740 1450 840 1490 930M1580 640C1540 740 1545 850 1580 960M1680 660C1650 760 1660 860 1700 950" stroke="#5c5c5c" stroke-width="22" fill="none" filter="url(#f16)"/>
<path d="M1400 985C1500 1040 1620 1050 1720 1060" stroke="#565656" stroke-width="22" fill="none" filter="url(#f16)"/>
<path d="M1700 905C1740 880 1780 890 1810 900V960C1770 940 1740 940 1700 905z" fill="#1c1c1c" filter="url(#f8)"/>
<ellipse cx="1700" cy="800" rx="80" ry="100" fill="#d4d4d4" filter="url(#f30)" opacity=".8"/>
<ellipse cx="1560" cy="990" rx="120" ry="40" fill="#cccccc" filter="url(#f30)" opacity=".7"/>
</g>
</g>
</svg>
</body></html>
